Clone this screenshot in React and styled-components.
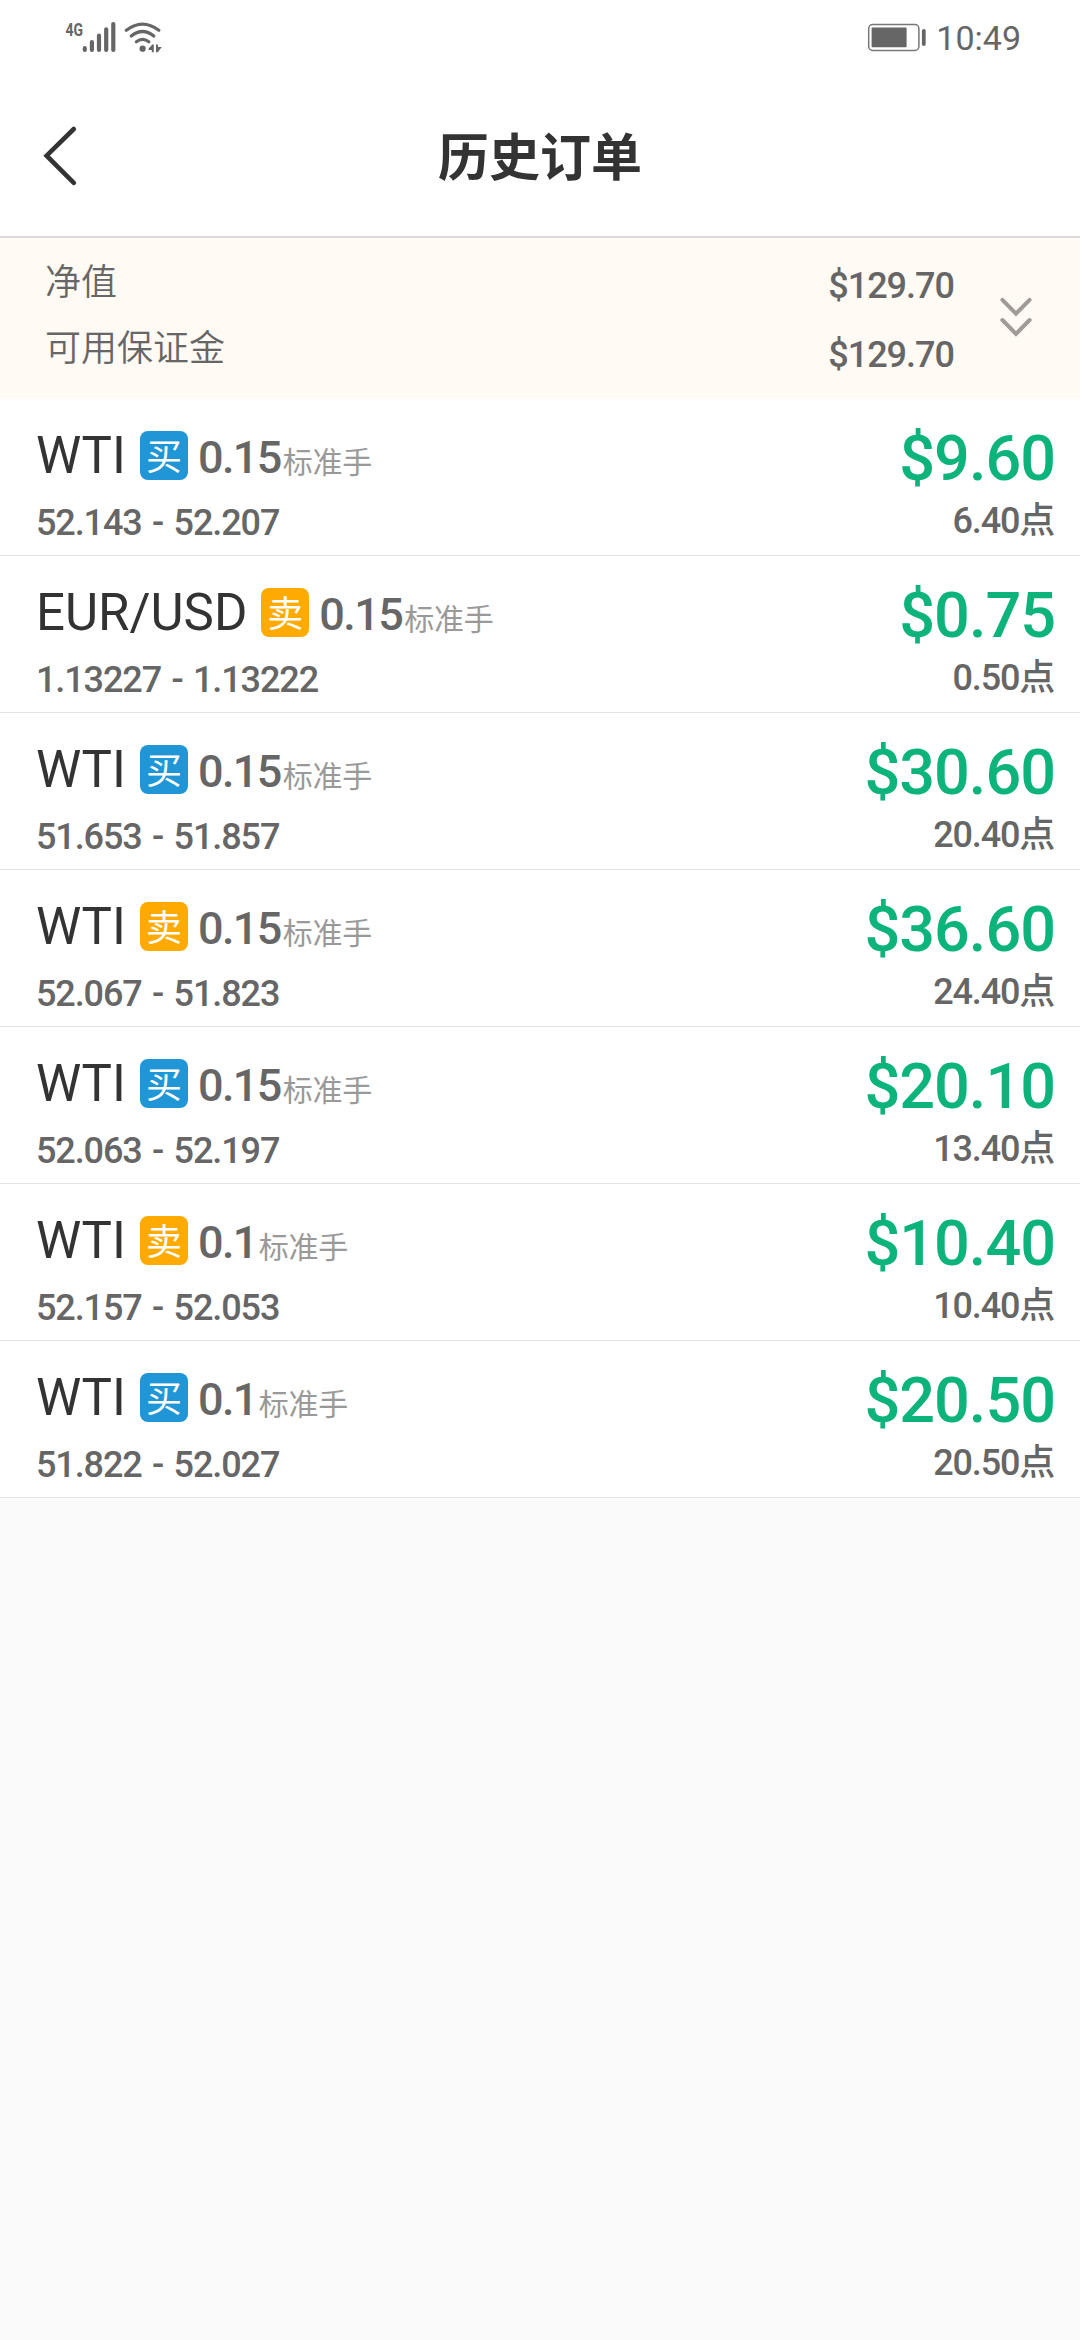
import React from "react";
import styled, { createGlobalStyle } from "styled-components";

const orders = [
   { symbol: "WTI", side: "buy", lots: "0.15", open: "52.143", close: "52.207", profit: "$9.60", points: "6.40" },
   { symbol: "EUR/USD", side: "sell", lots: "0.15", open: "1.13227", close: "1.13222", profit: "$0.75", points: "0.50" },
   { symbol: "WTI", side: "buy", lots: "0.15", open: "51.653", close: "51.857", profit: "$30.60", points: "20.40" },
   { symbol: "WTI", side: "sell", lots: "0.15", open: "52.067", close: "51.823", profit: "$36.60", points: "24.40" },
   { symbol: "WTI", side: "buy", lots: "0.15", open: "52.063", close: "52.197", profit: "$20.10", points: "13.40" },
   { symbol: "WTI", side: "sell", lots: "0.1", open: "52.157", close: "52.053", profit: "$10.40", points: "10.40" },
   { symbol: "WTI", side: "buy", lots: "0.1", open: "51.822", close: "52.027", profit: "$20.50", points: "20.50" }
];

const SignalIcon = () => (
   <svg width="104" height="36" viewBox="62 18 104 36" fill="none" stroke="#666" strokeLinecap="round">
      <text
         x="65.5"
         y="35.5"
         fill="#666"
         stroke="none"
         fontSize="19"
         fontWeight="700"
         textLength="17.5"
         lengthAdjust="spacingAndGlyphs"
      >
         4G
      </text>
      <path strokeWidth="4.2" d="M84.8 48.2V50M91.9 42V50M99 35.5V50M106.2 29.3V50M113.3 24V50" />
      <path strokeWidth="3.2" d="M126.3 30.3Q142.5 18 158.8 30.3M131.3 36Q142.5 27 153.8 36M136.4 41.7Q142.5 37 148.8 41.7" />
      <circle cx="142.6" cy="48.7" r="3.1" fill="#666" stroke="none" />
      <path fill="#666" stroke="none" d="M148.6 48.4L152.4 44.4H153.8V52.3H151.8V50H148.6ZM156 44.4H158V47H161.8L157.8 52.3H156Z" />
   </svg>
);

const BatteryIcon = () => (
   <svg width="60" height="30" viewBox="867 23 60 30" fill="none">
      <rect x="868.7" y="24.6" width="50.2" height="25.8" rx="4" stroke="#777" strokeWidth="1.5" />
      <rect x="871.6" y="27.6" width="35" height="19.6" rx="0.8" fill="#666" />
      <path d="M923.8 30.8V44" stroke="#666" strokeWidth="3.8" strokeLinecap="round" />
   </svg>
);

const BackIcon = () => (
   <svg width="36" height="64" viewBox="42 124 36 64" fill="none" stroke="#333" strokeWidth="4.6" strokeLinecap="round">
      <path d="M73.8 129L46.6 155.7L73.8 182.8" />
   </svg>
);

const ExpandIcon = () => (
   <svg width="36" height="44" viewBox="998 296 36 44" fill="none" stroke="#a09a98" strokeWidth="4" strokeLinecap="round">
      <path d="M1002.4 299.8L1016 313.6L1029.6 299.8M1002.4 320L1016 333.8L1029.6 320" />
   </svg>
);

const Order = ({ order }) => (
   <OrderRow>
      <div>
         <OrderHead>
            <Symbol>{order.symbol}</Symbol>
            <SideBadge $side={order.side}>{order.side === "buy" ? "买" : "卖"}</SideBadge>
            <Lots>
               {order.lots}
               <Unit>标准手</Unit>
            </Lots>
         </OrderHead>
         <Prices>
            {order.open} - {order.close}
         </Prices>
      </div>
      <Result>
         <Profit>{order.profit}</Profit>
         <Points>{order.points}点</Points>
      </Result>
   </OrderRow>
);

const App = () => (
   <Page>
      <GlobalStyle />
      <StatusBar>
         <SignalIcon />
         <StatusRight>
            <BatteryIcon />
            <Clock>10:49</Clock>
         </StatusRight>
      </StatusBar>
      <Header>
         <BackButton aria-label="返回">
            <BackIcon />
         </BackButton>
         <Title>历史订单</Title>
      </Header>
      <Summary>
         <Labels>
            <span>净值</span>
            <span>可用保证金</span>
         </Labels>
         <Values>
            <span>$129.70</span>
            <span>$129.70</span>
         </Values>
         <ExpandIcon />
      </Summary>
      <OrderList>
         {orders.map((order, i) => (
            <Order key={i} order={order} />
         ))}
      </OrderList>
   </Page>
);

const GlobalStyle = createGlobalStyle`
   * {
      box-sizing: border-box;
   }
   body {
      margin: 0;
      background: #fafafa;
      font-family: Roboto, "Noto Sans CJK SC", sans-serif;
      color: #666;
   }
   svg {
      display: block;
      flex-shrink: 0;
   }
`;

const Page = styled.div`
   width: 1080px;
   min-height: 2340px;
   background: #fafafa;
`;

const StatusBar = styled.div`
   height: 76px;
   padding: 18px 59px 0 62px;
   display: flex;
   justify-content: space-between;
   align-items: flex-start;
   background: #fff;
`;

const StatusRight = styled.div`
   display: flex;
   padding-top: 5px;
`;

const Clock = styled.span`
   margin-left: 9px;
   font-size: 34px;
   line-height: 30px;
`;

const Header = styled.header`
   height: 162px;
   display: grid;
   grid-template-columns: 120px 1fr 120px;
   align-items: center;
   background: #fff;
   border-bottom: 2px solid #dadada;
`;

const BackButton = styled.button`
   height: 64px;
   padding: 0 0 0 42px;
   border: 0;
   background: none;
`;

const Title = styled.h1`
   margin: 0;
   padding-top: 6px;
   text-align: center;
   font-size: 51px;
   line-height: 60px;
   font-weight: 700;
   color: #333;
`;

const Summary = styled.section`
   height: 161px;
   padding: 0 46px 0 45px;
   display: flex;
   align-items: flex-start;
   background: #fffaf3;

   svg {
      margin: 58px 0 0 44px;
   }
`;

const Labels = styled.div`
   flex: 1;
   display: flex;
   flex-direction: column;
   padding-top: 12px;
   font-size: 36px;
   font-weight: 350;
   line-height: 66px;
`;

const Values = styled.div`
   display: flex;
   flex-direction: column;
   padding-top: 14px;
   font-size: 36px;
   font-weight: 500;
   line-height: 69px;
   letter-spacing: -1px;
`;

const OrderList = styled.main`
   background: #fff;
`;

const OrderRow = styled.article`
   height: 157px;
   padding: 0 25px 0 36px;
   display: flex;
   justify-content: space-between;
   border-bottom: 1px solid #e3e3e3;
`;

const OrderHead = styled.div`
   height: 94px;
   padding-top: 32px;
   display: flex;
   align-items: baseline;
`;

const Symbol = styled.span`
   font-size: 51px;
   line-height: 50px;
   color: #333;
`;

const SideBadge = styled.span`
   align-self: flex-start;
   width: 48px;
   height: 49px;
   margin: 0 10px 0 14px;
   border-radius: 8px;
   background: ${({ $side }) => ($side === "buy" ? "#2196d6" : "#ffaa00")};
   color: #fff;
   font-size: 36px;
   line-height: 54px;
   text-align: center;
`;

const Lots = styled.span`
   font-size: 45px;
   font-weight: 500;
   line-height: 50px;
   letter-spacing: -1.6px;
`;

const Unit = styled.span`
   margin-left: 2px;
   font-size: 30px;
   font-weight: 400;
   letter-spacing: -0.2px;
   color: #999;
`;

const Prices = styled.div`
   font-size: 36px;
   font-weight: 500;
   line-height: 60px;
   letter-spacing: -1.1px;
   word-spacing: 2.5px;
`;

const Result = styled.div`
   display: flex;
   flex-direction: column;
   align-items: flex-end;
`;

const Profit = styled.strong`
   padding-top: 25px;
   font-size: 63px;
   font-weight: 500;
   line-height: 70px;
   letter-spacing: -1px;
   color: #0cb37a;
`;

const Points = styled.span`
   padding-right: 1px;
   font-size: 36px;
   font-weight: 500;
   line-height: 54px;
   letter-spacing: -1.2px;
`;

export default App;
